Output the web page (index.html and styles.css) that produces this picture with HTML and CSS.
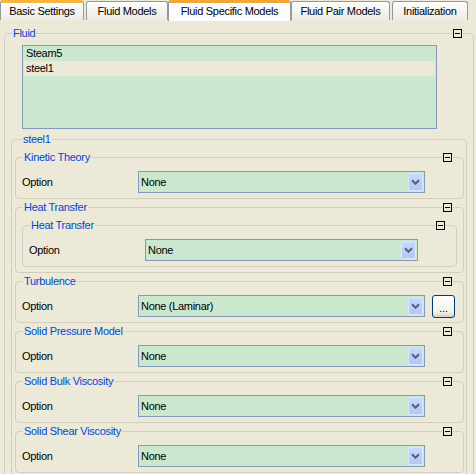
FILE: index.html
```html
<!DOCTYPE html>
<html lang="en">
<head>
    <meta charset="UTF-8">
    <title>Fluid Specific Models</title>
    <link rel="stylesheet" href="styles.css">
</head>
<body>
    <div class="tabs">
        <div class="tab tab-basic hot">Basic Settings</div>
        <div class="tab tab-models">Fluid Models</div>
        <div class="tab tab-specific active">Fluid Specific Models</div>
        <div class="tab tab-pair">Fluid Pair Models</div>
        <div class="tab tab-init">Initialization</div>
    </div>
    <div class="pane">
        <div class="group fluid">
            <div class="group-head"><span class="title">Fluid</span><span class="toggle"></span></div>
            <div class="list">
                <div class="item">Steam5</div>
                <div class="item sel">steel1</div>
            </div>
            <div class="group steel">
                <div class="group-head"><span class="title">steel1</span></div>

                <div class="group">
                    <div class="group-head"><span class="title">Kinetic Theory</span><span class="toggle"></span></div>
                    <div class="row">
                        <span class="label">Option</span>
                        <div class="combo"><span class="value">None</span><span class="drop"><svg width="9" height="6" viewBox="0 0 9 6"><path d="M1 1.2l3.5 3.5 3.5-3.5" fill="none" stroke="#4d6185" stroke-width="2"/></svg></span></div>
                    </div>
                </div>

                <div class="group nest">
                    <div class="group-head"><span class="title">Heat Transfer</span><span class="toggle"></span></div>
                    <div class="group">
                        <div class="group-head"><span class="title">Heat Transfer</span><span class="toggle"></span></div>
                        <div class="row">
                            <span class="label">Option</span>
                            <div class="combo"><span class="value">None</span><span class="drop"><svg width="9" height="6" viewBox="0 0 9 6"><path d="M1 1.2l3.5 3.5 3.5-3.5" fill="none" stroke="#4d6185" stroke-width="2"/></svg></span></div>
                        </div>
                    </div>
                </div>

                <div class="group">
                    <div class="group-head"><span class="title">Turbulence</span><span class="toggle"></span></div>
                    <div class="row with-btn">
                        <span class="label">Option</span>
                        <div class="combo"><span class="value">None (Laminar)</span><span class="drop"><svg width="9" height="6" viewBox="0 0 9 6"><path d="M1 1.2l3.5 3.5 3.5-3.5" fill="none" stroke="#4d6185" stroke-width="2"/></svg></span></div>
                        <button class="more">...</button>
                    </div>
                </div>

                <div class="group">
                    <div class="group-head"><span class="title">Solid Pressure Model</span><span class="toggle"></span></div>
                    <div class="row">
                        <span class="label">Option</span>
                        <div class="combo"><span class="value">None</span><span class="drop"><svg width="9" height="6" viewBox="0 0 9 6"><path d="M1 1.2l3.5 3.5 3.5-3.5" fill="none" stroke="#4d6185" stroke-width="2"/></svg></span></div>
                    </div>
                </div>

                <div class="group">
                    <div class="group-head"><span class="title">Solid Bulk Viscosity</span><span class="toggle"></span></div>
                    <div class="row">
                        <span class="label">Option</span>
                        <div class="combo"><span class="value">None</span><span class="drop"><svg width="9" height="6" viewBox="0 0 9 6"><path d="M1 1.2l3.5 3.5 3.5-3.5" fill="none" stroke="#4d6185" stroke-width="2"/></svg></span></div>
                    </div>
                </div>

                <div class="group">
                    <div class="group-head"><span class="title">Solid Shear Viscosity</span><span class="toggle"></span></div>
                    <div class="row">
                        <span class="label">Option</span>
                        <div class="combo"><span class="value">None</span><span class="drop"><svg width="9" height="6" viewBox="0 0 9 6"><path d="M1 1.2l3.5 3.5 3.5-3.5" fill="none" stroke="#4d6185" stroke-width="2"/></svg></span></div>
                    </div>
                </div>
            </div>
        </div>
    </div>
</body>
</html>
```

FILE: styles.css
```css
html, body {
    overflow: hidden;
}
body {
    margin: 0;
    background-color: #ece9d8;
    color: #000;
    font-family: "Liberation Sans", Arial, sans-serif;
    font-size: 11px;
    letter-spacing: -0.3px;
}
.tabs {
    display: flex;
    align-items: flex-end;
    height: 20px;
}
.tab {
    box-sizing: border-box;
    height: 19px;
    border: 1px solid #919b9c;
    border-bottom: none;
    border-radius: 3px 3px 0 0;
    background: linear-gradient(#fefefe, #ecebe6);
    text-align: center;
    line-height: 18px;
    margin-right: 2px;
}
.tab.hot {
    height: 20px;
    border-top: 3px solid #f7b53c;
    line-height: 17px;
}
.tab.active {
    height: 21px;
    margin: 0 0 -1px -2px;
    border-top: 3px solid #f2a535;
    background: #fcfcfe;
    line-height: 16px;
    position: relative;
}
.tab-basic { width: 84px; }
.tab-models { width: 82px; }
.tab-specific { width: 123px; }
.tab-pair { width: 99px; }
.tab-init { width: 76px; }

.pane {
    padding: 13px 2px 0 4px;
}
.group {
    border: 1px solid #d0d0bf;
    border-radius: 4px;
    padding: 0 0 5px;
    margin-top: 8px;
}
.group-head + .group {
    margin-top: 11px;
}
.group.fluid {
    margin-top: 0;
    padding-bottom: 0;
}
.group.steel {
    margin: 10px 6px 0 6px;
    padding: 0 2px 4px 3px;
}
.group.nest {
    padding: 0 6px 5px;
}
.group-head {
    display: flex;
    justify-content: space-between;
    align-items: center;
    height: 13px;
    margin: -7px 11px 0 7px;
}
.nest > .group-head {
    margin: -7px 5px 0 1px;
}
.title {
    color: #0046d5;
    background-color: #ece9d8;
    padding: 0 1px;
    line-height: 13px;
}
.toggle {
    box-sizing: border-box;
    width: 9px;
    height: 9px;
    border: 1px solid #000;
    background: linear-gradient(#000, #000) center / 5px 1px no-repeat #ece9d8;
    box-shadow: 0 0 0 1px #ece9d8;
}
.list {
    box-sizing: border-box;
    height: 84px;
    margin: 5px 36px 0 17px;
    padding: 0 1px;
    border: 1px solid #7f9db9;
    background-color: #cbe8cf;
}
.item {
    line-height: 15px;
    padding-left: 2px;
}
.item.sel {
    background-color: #ece9d8;
}
.row {
    display: flex;
    align-items: center;
    height: 22px;
    margin-top: 7px;
    padding: 0 38px 0 6px;
}
.row.with-btn {
    padding-right: 8px;
}
.label {
    flex: none;
    width: 116px;
}
.combo {
    flex: 1;
    display: flex;
    box-sizing: border-box;
    height: 22px;
    border: 1px solid #7f9db9;
    background-color: #cbe8cf;
}
.value {
    flex: 1;
    padding-left: 2px;
    line-height: 20px;
}
.drop {
    box-sizing: border-box;
    width: 15px;
    margin: 1px 1px 1px 0;
    border: 1px solid #dde6fb;
    border-radius: 2px;
    background: linear-gradient(#c9d8fd, #b3c7f4);
    display: flex;
    justify-content: center;
    align-items: center;
}
.more {
    flex: none;
    box-sizing: border-box;
    width: 23px;
    height: 23px;
    margin-left: 7px;
    padding: 3px 0 0;
    border: 1px solid #003c74;
    border-radius: 3px;
    background: linear-gradient(#ffffff, #f3f2ec 75%, #d6d0c5);
    font-family: inherit;
    font-size: 11px;
    color: #000;
}
```
